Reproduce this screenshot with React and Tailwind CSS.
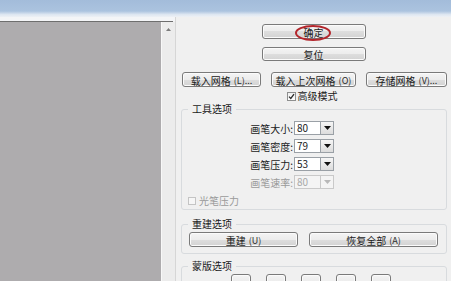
import React from 'react';

const btn =
  "flex items-center justify-center h-[15px] pt-[2px] border border-[#7a7a7a] rounded-[3px] bg-[linear-gradient(#f4f4f4,#ececec_50%,#dedede_50%,#d3d3d3)] text-[10px] leading-none text-[#1a1a1a] shadow-[inset_0_0_0_1px_#fbfbfb]";

function Btn({ className = '', children }) {
  return <div className={`${btn} ${className}`}>{children}</div>;
}

function Key({ children }) {
  return <span className="ml-[3px] text-[9px] leading-none text-[#2a2a2a]">{children}</span>;
}

function Spin({ label, value, disabled }) {
  return (
    <div className="flex items-center h-[14px]">
      <span className={`w-[112px] pr-[1px] pt-[1px] text-right text-[10px] leading-none ${disabled ? 'text-[#9a9a9a]' : 'text-[#1a1a1a]'}`}>
        {label}
      </span>
      <div
        className={`flex items-center w-[27px] h-[14px] border pl-[2px] text-[10px] leading-none ${
          disabled ? 'border-[#c9c9c9] bg-[#f4f4f4] text-[#a8a8a8]' : 'border-[#9aa0a6] bg-white text-[#1a1a1a]'
        }`}
      >
        {value}
      </div>
      <div
        className={`flex items-center justify-center w-[13px] h-[14px] border border-l-0 ${
          disabled ? 'border-[#c9c9c9] bg-[#f4f4f4]' : 'border-[#9aa0a6] bg-[linear-gradient(#f6f6f6,#dcdcdc)]'
        }`}
      >
        <svg width="7" height="4" viewBox="0 0 7 4">
          <path d="M0 0h7L3.5 4z" fill={disabled ? '#b8b8b8' : '#111'} />
        </svg>
      </div>
    </div>
  );
}

export default function App() {
  return (
    <div className="w-[451px] h-[281px] overflow-hidden flex flex-col bg-[#f0f0f0] font-['Noto_Sans_CJK_SC','Noto_Sans',sans-serif]">
      {/* title strip */}
      <div className="h-[17px] shrink-0 bg-[linear-gradient(#a3bcda,#abc3df_65%,#dde6f1_85%,#eef1f5)]" />

      <div className="flex flex-1 min-h-0">
        {/* canvas + scrollbar */}
        <div className="w-[175px] shrink-0 flex flex-col">
          <div className="h-[4px] bg-[#f4f5f7]" />
          <div className="h-[1px] bg-[#6e6e6e] mr-[2px]" />
          <div className="flex flex-1">
            <div className="w-[161px] bg-[#aeacae]" />
            <div className="w-[14px] bg-[#ececec] border-l border-[#f8f8f8] flex flex-col items-center pt-[6px]">
              <svg width="5" height="3" viewBox="0 0 5 3">
                <path d="M0 3L2.5 0L5 3z" fill="#7c7c7c" />
              </svg>
            </div>
          </div>
        </div>

        {/* options panel */}
        <div className="flex-1 border-l border-[#d6d6d6] bg-[#f0f0f0] flex flex-col pt-[7px]">
          <div className="relative mx-auto w-[104px]">
            <Btn className="w-[104px]">确定</Btn>
            <div className="absolute left-[33px] top-[1px] w-[36px] h-[16px] rounded-[50%] border-2 border-[#b3262c]" />
          </div>
          <Btn className="mx-auto mt-[8px] w-[104px]">复位</Btn>

          <div className="mt-[6px] ml-[1px] h-[1px] bg-[#7a7a7a]" />

          <div className="mt-[5px] pl-[6px] flex gap-[10px]">
            <Btn className="w-[79px]">载入网格<Key>(L)...</Key></Btn>
            <Btn className="w-[85px]">载入上次网格<Key>(O)</Key></Btn>
            <Btn className="w-[81px]">存储网格<Key>(V)...</Key></Btn>
          </div>

          <div className="mt-[4px] h-[11px] flex items-center justify-center gap-[2px] pr-[3px]">
            <div className="w-[9px] h-[9px] border border-[#8e8f8f] bg-[linear-gradient(#f0f0f0,#ffffff)] flex items-center justify-center">
              <svg width="7" height="7" viewBox="0 0 7 7">
                <path d="M1 3.6L2.8 5.4L6 1.2" stroke="#2a2a2a" strokeWidth="1.3" fill="none" />
              </svg>
            </div>
            <span className="text-[10px] leading-none text-[#1a1a1a]">高级模式</span>
          </div>

          {/* 工具选项 */}
          <fieldset className="mt-[2px] ml-[5px] w-[266px] border border-[#d8dbde] rounded-[3px] pb-[3px]">
            <legend className="ml-[6px] px-[4px] text-[10px] leading-[12px] text-[#1a1a1a]">工具选项</legend>
            <div className="mt-[6px] flex flex-col gap-[4px]">
              <Spin label="画笔大小:" value="80" />
              <Spin label="画笔密度:" value="79" />
              <Spin label="画笔压力:" value="53" />
              <Spin label="画笔速率:" value="80" disabled />
            </div>
            <div className="mt-[6px] h-[11px] pl-[6px] flex items-center gap-[3px]">
              <div className="w-[8px] h-[8px] border border-[#c4c4c4] bg-[#f6f6f6]" />
              <span className="text-[10px] leading-none text-[#9a9a9a]">光笔压力</span>
            </div>
          </fieldset>

          {/* 重建选项 */}
          <fieldset className="mt-[8px] ml-[5px] w-[266px] border border-[#d8dbde] rounded-[3px] pb-[6px]">
            <legend className="ml-[6px] px-[4px] text-[10px] leading-[12px] text-[#1a1a1a]">重建选项</legend>
            <div className="mt-[2px] pl-[7px] flex gap-[11px]">
              <Btn className="w-[109px]">重建<Key>(U)</Key></Btn>
              <Btn className="w-[129px]">恢复全部<Key>(A)</Key></Btn>
            </div>
          </fieldset>

          {/* 蒙版选项 */}
          <fieldset className="mt-[6px] ml-[5px] w-[266px] border border-[#d8dbde] rounded-[3px] pb-[6px]">
            <legend className="ml-[6px] px-[4px] text-[10px] leading-[12px] text-[#1a1a1a]">蒙版选项</legend>
            <div className="mt-[2px] pl-[49px] flex gap-[15px]">
              {[0, 1, 2, 3, 4].map((i) => (
                <Btn key={i} className="w-[20px]" />
              ))}
            </div>
          </fieldset>
        </div>
      </div>
    </div>
  );
}
